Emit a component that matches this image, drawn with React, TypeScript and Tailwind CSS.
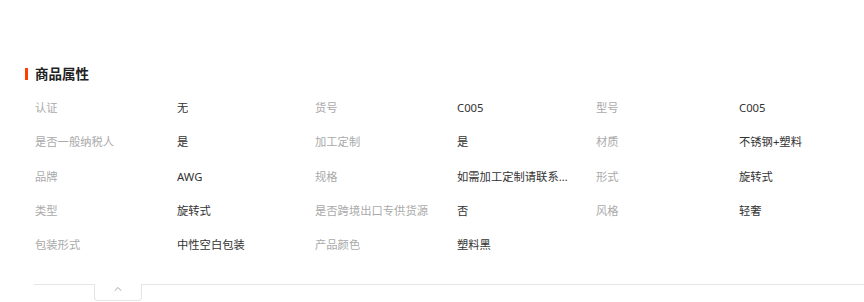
import { ChevronUp } from "lucide-react";

type Attr = { label: string; value: string };

const attrs: Attr[] = [
  { label: "认证", value: "无" },
  { label: "货号", value: "C005" },
  { label: "型号", value: "C005" },
  { label: "是否一般纳税人", value: "是" },
  { label: "加工定制", value: "是" },
  { label: "材质", value: "不锈钢+塑料" },
  { label: "品牌", value: "AWG" },
  { label: "规格", value: "如需加工定制请联系客服" },
  { label: "形式", value: "旋转式" },
  { label: "类型", value: "旋转式" },
  { label: "是否跨境出口专供货源", value: "否" },
  { label: "风格", value: "轻奢" },
  { label: "包装形式", value: "中性空白包装" },
  { label: "产品颜色", value: "塑料黑" },
];

export default function App() {
  return (
    <div className="w-[864px] h-[302px] bg-white overflow-hidden pt-[67px] font-['Noto_Sans','Noto_Sans_CJK_SC',sans-serif]">
      <div className="flex items-center pl-[25px] gap-[7px]">
        <span className="w-[3px] h-[12px] bg-[#ff4000]" />
        <h2 className="text-[13.5px] leading-[14px] font-bold text-[#222]">商品属性</h2>
      </div>
      <div className="pl-[35px] mt-[10px] grid grid-cols-[142px_138px_142px_139px_143px_1fr]">
        {attrs.map((a, i) => (
          <div key={i} className="contents">
            <div className="h-[34.4px] flex items-center text-[11.3px] text-[#aaa] whitespace-nowrap">{a.label}</div>
            <div className="h-[34.4px] flex items-center text-[11.3px] text-[#333]">
              <span className="block max-w-[113px] truncate">{a.value}</span>
            </div>
          </div>
        ))}
      </div>
      <div className="ml-[34px] mt-[21px] border-t border-[#e5e5e5] relative">
        <div className="absolute left-[60px] top-[-1px] w-[48px] h-[17px] border border-t-0 border-[#e5e5e5] rounded-b-[4px] bg-white flex justify-center">
          <ChevronUp size={12} strokeWidth={1.5} className="text-[#888] mt-[-1px]" />
        </div>
      </div>
    </div>
  );
}
